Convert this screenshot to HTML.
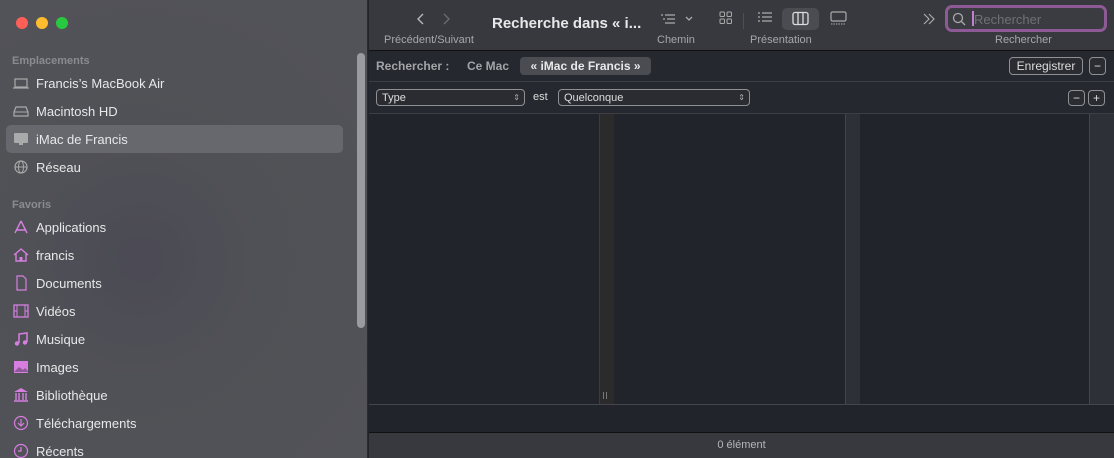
<!DOCTYPE html>
<html><head><meta charset="utf-8"><style>
*{margin:0;padding:0;box-sizing:border-box}
html,body{width:1114px;height:458px;overflow:hidden}
body{font-family:"Liberation Sans",sans-serif;background:#21242b;position:relative}
.sb{position:absolute;left:0;top:0;width:368px;height:458px;background:radial-gradient(circle at 140px 260px,#4b4a55 0,#505156 120px,#525358 300px);border-right:1px solid #2a2b2e}
.dot{position:absolute;top:17px;width:12px;height:12px;border-radius:50%}
.hd{position:absolute;left:12px;font-size:11px;font-weight:bold;color:#8a8b8f}
.it{position:absolute;left:12px;height:24px;font-size:13px;color:#e8e8ea;display:flex;align-items:center}
.it svg{width:18px;height:16px;margin-right:6px;flex:none}
.sel{position:absolute;left:6px;top:125px;width:337px;height:28px;background:#67686d;border-radius:5px}
.scroll{position:absolute;left:357px;top:53px;width:8px;height:275px;background:#9a9b9f;border-radius:4px}
.tb{position:absolute;left:369px;top:0;width:745px;height:51px;background:#37393e;border-bottom:1px solid #111}
.t{position:absolute;color:#a6a7ab;font-size:11px}
.sr{position:absolute;left:369px;top:51px;width:745px;height:31px;background:#25282e;border-bottom:1px solid #3c3e43}
.fr{position:absolute;left:369px;top:82px;width:745px;height:32px;background:#25282e;border-bottom:1px solid #3c3e43}
.btn{position:absolute;border:1px solid #8f9094;border-radius:4px;color:#ddd;font-size:12px;background:#2a2c31;display:flex;align-items:center}
.st{position:absolute;left:369px;top:432px;width:745px;height:26px;background:#37393e;border-top:1px solid #111;color:#b5b6b9;font-size:11px;text-align:center;line-height:25px}
</style></head><body>
<div class="sb">
<div class="dot" style="left:16px;background:#fe5f57"></div>
<div class="dot" style="left:36px;background:#febc2e"></div>
<div class="dot" style="left:56px;background:#28c840"></div>
<div class="hd" style="top:55px">Emplacements</div>
<div class="sel"></div>
<div class="it" style="top:71px"><svg viewBox="0 0 18 16"><rect x="3" y="4" width="12" height="8" fill="none" stroke="#aaa" stroke-width="1.2"/><path d="M1 13h16" stroke="#aaa" stroke-width="1.2"/></svg>Francis’s MacBook Air</div>
<div class="it" style="top:99px"><svg viewBox="0 0 18 16"><path d="M4 4h10l2 5v4H2V9z" fill="none" stroke="#aaa" stroke-width="1.2"/><path d="M2 9h14" stroke="#aaa"/></svg>Macintosh HD</div>
<div class="it" style="top:127px"><svg viewBox="0 0 18 16"><rect x="2" y="2" width="14" height="10" rx="1" fill="#aaa"/><rect x="7" y="12" width="4" height="2" fill="#aaa"/></svg>iMac de Francis</div>
<div class="it" style="top:155px"><svg viewBox="0 0 18 16"><circle cx="9" cy="8" r="6" fill="none" stroke="#aaa" stroke-width="1.2"/><ellipse cx="9" cy="8" rx="2.5" ry="6" fill="none" stroke="#aaa"/><path d="M3 8h12" stroke="#aaa"/></svg>Réseau</div>
<div class="hd" style="top:199px">Favoris</div>
<div class="it" style="top:215px"><svg viewBox="0 0 18 16"><path d="M9 2L3 14M9 2l6 12M4 11h10" stroke="#d67fe0" stroke-width="1.4" fill="none"/></svg>Applications</div>
<div class="it" style="top:243px"><svg viewBox="0 0 18 16"><path d="M2 8l7-6 7 6M4 7v7h10V7" stroke="#d67fe0" stroke-width="1.4" fill="none"/><rect x="7.5" y="10" width="3" height="4" fill="#d67fe0"/></svg>francis</div>
<div class="it" style="top:271px"><svg viewBox="0 0 18 16"><path d="M5 1h6l3 3v11H5z" stroke="#d67fe0" stroke-width="1.2" fill="none"/></svg>Documents</div>
<div class="it" style="top:299px"><svg viewBox="0 0 18 16"><rect x="2" y="2" width="14" height="12" stroke="#d67fe0" stroke-width="1.3" fill="none"/><path d="M5 2v12M13 2v12M2 8h3M13 8h3" stroke="#d67fe0"/></svg>Vidéos</div>
<div class="it" style="top:327px"><svg viewBox="0 0 18 16"><path d="M7 12V3l8-1v9" stroke="#d67fe0" stroke-width="1.5" fill="none"/><circle cx="5" cy="12.5" r="2.2" fill="#d67fe0"/><circle cx="13" cy="11.5" r="2.2" fill="#d67fe0"/></svg>Musique</div>
<div class="it" style="top:355px"><svg viewBox="0 0 18 16"><rect x="2" y="2" width="14" height="12" fill="#d67fe0"/><path d="M2 13l5-5 4 3 2-2 3 3v1H2z" fill="#8d5a98"/></svg>Images</div>
<div class="it" style="top:383px"><svg viewBox="0 0 18 16"><path d="M9 1l7 4H2z" fill="#d67fe0"/><path d="M4 6v7M7 6v7M11 6v7M14 6v7M2 14h14" stroke="#d67fe0" stroke-width="1.4"/></svg>Bibliothèque</div>
<div class="it" style="top:411px"><svg viewBox="0 0 18 16"><circle cx="9" cy="8" r="6.5" stroke="#d67fe0" stroke-width="1.2" fill="none"/><path d="M9 4v7M6 8l3 3 3-3" stroke="#d67fe0" stroke-width="1.2" fill="none"/></svg>Téléchargements</div>
<div class="it" style="top:439px"><svg viewBox="0 0 18 16"><circle cx="9" cy="8" r="6.5" stroke="#d67fe0" stroke-width="1.2" fill="none"/><path d="M9 4v4H6" stroke="#d67fe0" stroke-width="1.2" fill="none"/></svg>Récents</div>
<div class="scroll"></div>
</div>

<div class="tb">
<svg style="position:absolute;left:46px;top:12px" width="40" height="14"><path d="M8 2L3 7l5 5" stroke="#b8b8bb" stroke-width="1.4" fill="none"/><path d="M29 2l5 5-5 5" stroke="#6a6b6f" stroke-width="1.4" fill="none"/></svg>
<div class="t" style="left:15px;top:34px">Précédent/Suivant</div>
<div style="position:absolute;left:123px;top:15px;color:#e8e8ea;font-size:15px;font-weight:bold">Recherche dans « i...</div>
<svg style="position:absolute;left:290px;top:12px" width="40" height="14"><path d="M2 3h2M6 3h10M4 7h2M8 7h8M6 11h10" stroke="#aaa" stroke-width="1.2"/><path d="M27 5l3 3 3-3" stroke="#aaa" stroke-width="1.3" fill="none"/></svg>
<div class="t" style="left:288px;top:34px">Chemin</div>
<svg style="position:absolute;left:350px;top:10px" width="14" height="16"><rect x="1" y="2" width="4.5" height="4.5" rx="1" fill="none" stroke="#aaa"/><rect x="8" y="2" width="4.5" height="4.5" rx="1" fill="none" stroke="#aaa"/><rect x="1" y="9" width="4.5" height="4.5" rx="1" fill="none" stroke="#aaa"/><rect x="8" y="9" width="4.5" height="4.5" rx="1" fill="none" stroke="#aaa"/></svg>
<div style="position:absolute;left:374px;top:13px;width:1px;height:16px;background:#4d4f54"></div>
<svg style="position:absolute;left:388px;top:11px" width="16" height="14"><path d="M1 2h2M1 6h2M1 10h2M5 2h10M5 6h10M5 10h10" stroke="#aaa" stroke-width="1.2"/></svg>
<div style="position:absolute;left:413px;top:8px;width:37px;height:22px;background:#4a4c51;border-radius:5px"></div>
<svg style="position:absolute;left:423px;top:11px" width="17" height="15"><rect x="1" y="1.5" width="15" height="12" rx="2" fill="none" stroke="#ddd" stroke-width="1.3"/><path d="M6 1.5v12M11 1.5v12" stroke="#ddd" stroke-width="1.3"/></svg>
<svg style="position:absolute;left:461px;top:11px" width="17" height="15"><rect x="1" y="1" width="15" height="9" rx="1.5" fill="none" stroke="#aaa" stroke-width="1.2"/><path d="M1 13h15" stroke="#aaa" stroke-dasharray="1.5 1"/></svg>
<div class="t" style="left:381px;top:34px">Présentation</div>
<svg style="position:absolute;left:553px;top:12px" width="14" height="14"><path d="M2 2l5 5-5 5M7 2l5 5-5 5" stroke="#aaa" stroke-width="1.2" fill="none"/></svg>
<div style="position:absolute;left:576px;top:5px;width:162px;height:27px;border:3px solid #8e5a95;border-radius:7px;background:#3a3c41"></div>
<svg style="position:absolute;left:583px;top:12px" width="14" height="14"><circle cx="6" cy="6" r="4.5" fill="none" stroke="#aaa" stroke-width="1.3"/><path d="M9.5 9.5L13 13" stroke="#aaa" stroke-width="1.3"/></svg>
<div style="position:absolute;left:603px;top:11px;width:2px;height:15px;background:#c57fd0"></div>
<div style="position:absolute;left:605px;top:12px;font-size:13px;color:#6f7075">Rechercher</div>
<div class="t" style="left:626px;top:34px">Rechercher</div>
</div>

<div class="sr">
<div style="position:absolute;left:7px;top:8px;font-size:12px;font-weight:bold;color:#a3a4a8">Rechercher :</div>
<div style="position:absolute;left:98px;top:8px;font-size:12px;font-weight:bold;color:#a3a4a8">Ce Mac</div>
<div style="position:absolute;left:151px;top:6px;width:131px;height:18px;background:#4a4c52;border-radius:4px;font-size:12px;font-weight:bold;color:#e8e8ea;text-align:center;line-height:18px">« iMac de Francis »</div>
<div class="btn" style="left:640px;top:6px;width:74px;height:18px;justify-content:center">Enregistrer</div>
<div class="btn" style="left:720px;top:6px;width:17px;height:18px;justify-content:center">−</div>
</div>

<div class="fr">
<div class="btn" style="left:7px;top:7px;width:149px;height:17px;font-size:11px;padding-left:5px">Type<span style="position:absolute;right:4px;font-size:8px;color:#aaa">⇕</span></div>
<div style="position:absolute;left:164px;top:9px;font-size:11px;color:#ddd">est</div>
<div class="btn" style="left:189px;top:7px;width:192px;height:17px;font-size:11px;padding-left:5px">Quelconque<span style="position:absolute;right:4px;font-size:8px;color:#aaa">⇕</span></div>
<div class="btn" style="left:699px;top:8px;width:17px;height:16px;justify-content:center">−</div>
<div class="btn" style="left:719px;top:8px;width:17px;height:16px;justify-content:center">+</div>
</div>

<div style="position:absolute;left:599px;top:114px;width:15px;height:291px;background:#2b2b2b;border-left:1px solid #3a3c40"></div>
<div style="position:absolute;left:603px;top:392px;width:1px;height:7px;background:#777"></div>
<div style="position:absolute;left:606px;top:392px;width:1px;height:7px;background:#777"></div>
<div style="position:absolute;left:845px;top:114px;width:15px;height:291px;background:#2d3036;border-left:1px solid #44464b"></div>
<div style="position:absolute;left:1089px;top:114px;width:25px;height:291px;background:#2d3036;border-left:1px solid #44464b"></div>
<div style="position:absolute;left:369px;top:404px;width:745px;height:1px;background:#44464b"></div>
<div class="st">0 élément</div>
</body></html>
